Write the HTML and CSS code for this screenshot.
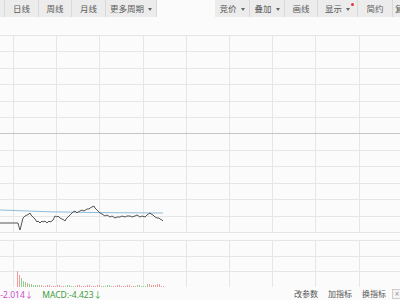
FILE: index.html
```html
<!DOCTYPE html>
<html lang="zh-CN">
<head>
  <meta charset="UTF-8" />
  <title>分时走势</title>
  <link rel="stylesheet" href="styles.css">
</head>
<body>
  <div class="toolbar">
    <div class="tool-group">
      <div class="btn w5"></div>
      <div class="btn w34">日线</div>
      <div class="btn w33">周线</div>
      <div class="btn w34">月线</div>
      <div class="btn w51">更多周期<span class="caret"></span></div>
    </div>
    <div class="tool-group right">
      <div class="btn w35">竞价<span class="caret"></span></div>
      <div class="btn w35">叠加<span class="caret"></span></div>
      <div class="btn w33">画线</div>
      <div class="btn w40 has-dot">显示<span class="caret"></span><span class="dot"></span></div>
      <div class="btn w35">简约</div>
      <div class="btn w35 cut">复权</div>
    </div>
  </div>

  <svg class="chart" width="400" height="270" viewBox="0 17 400 270">
    <g id="grid" shape-rendering="crispEdges"></g>
    <line class="mid" x1="0" y1="133.5" x2="400" y2="133.5" shape-rendering="crispEdges"/>
    <polyline class="avg" points="0,210 50,211.8 100,212.6 163,213"/>
    <polyline class="price" points="0,223 18,223 19,227 20,230 21,226 23,218 25,216 27,215 29,214 30,213 31,215 33,217 35,219 37,222 38,221 40,223 42,221 43,222 45,221 47,223 49,221 50,222 52,221 53,220 54,218 55,216 57,217 58,216 60,218 62,219 64,220 65,221 66,219 68,217 70,215 72,213 73,212 75,211 77,213 78,212 80,211 82,210 84,211 87,209 89,209 90,208 92,207 94,206 95,208 97,210 99,212 100,213 102,214 105,216 107,215 110,217 112,216 115,218 117,217 120,217 122,216 125,217 127,216 130,216 132,217 135,216 137,215 140,217 142,216 145,217 147,215 150,213 151,214 153,215 155,217 157,218 159,218 160,219 162,220 163,221"/>
    <g id="bars" shape-rendering="crispEdges"></g>
  </svg>

  <div class="legend">
    <div class="legend-left">
      <span class="dea">:-2.014↓</span>
      <span class="macd">MACD:-4.423↓</span>
    </div>
    <div class="legend-right">
      <span>改参数</span>
      <span>加指标</span>
      <span>换指标</span>
      <span class="close">×</span>
    </div>
  </div>

  <script>
    const NS = "http://www.w3.org/2000/svg";
    const grid = document.getElementById('grid');
    const bars = document.getElementById('bars');

    function line(x1, y1, x2, y2) {
      const l = document.createElementNS(NS, 'line');
      l.setAttribute('x1', x1); l.setAttribute('y1', y1);
      l.setAttribute('x2', x2); l.setAttribute('y2', y2);
      grid.appendChild(l);
    }

    // main chart: 12 rows, indicator: 3 rows
    for (let i = 0; i <= 12; i++) {
      const y = Math.round(35 + i * 16.42) + 0.5;
      if (i !== 6) line(0, y, 400, y);
    }
    for (let i = 0; i <= 3; i++) {
      const y = Math.round(240 + i * 15.67) + 0.5;
      line(0, y, 400, y);
    }
    for (let i = 0; i < 9; i++) {
      const x = Math.round(13 + i * 43.2) + 0.5;
      line(x, 35, x, 232);
      line(x, 240, x, 287);
    }

    // macd bars
    for (let x = 17; x <= 163; x += 2) {
      const k = x - 17;
      let h = 14 * Math.exp(-k / 6) + 1 + ((x * 7) % 5) / 5;
      if (x > 145 && x < 160) h += 1;
      const r = document.createElementNS(NS, 'rect');
      r.setAttribute('x', x);
      r.setAttribute('y', 287 - h);
      r.setAttribute('width', 1);
      r.setAttribute('height', h);
      const green = (k > 2 && k < 10) || (Math.floor(k / 12) % 3 === 1);
      r.setAttribute('class', green ? 'bar-down' : 'bar-up');
      bars.appendChild(r);
    }
  </script>
</body>
</html>
```

FILE: styles.css
```css
html, body {
  margin: 0;
  width: 400px;
  height: 300px;
  overflow: hidden;
}
body {
  background: #fbfbfb;
  font-family: "Noto Sans", "Noto Sans CJK SC", sans-serif;
  color: #5a5a5a;
}
.toolbar {
  display: flex;
  height: 17px;
  overflow: hidden;
}
.tool-group {
  display: flex;
  flex-shrink: 0;
  background: #ececec;
}
.tool-group.right {
  margin-left: 58px;
}
.btn {
  position: relative;
  box-sizing: border-box;
  flex-shrink: 0;
  height: 17px;
  line-height: 17px;
  font-size: 8.5px;
  text-align: center;
  border-right: 1px solid #d9d9d9;
  white-space: nowrap;
}
.w5 { width: 5px; }
.w33 { width: 33px; }
.w34 { width: 34px; }
.w35 { width: 35px; }
.w40 { width: 40px; }
.w51 { width: 51px; }
.btn.cut {
  text-align: left;
  padding-left: 2px;
}
.caret {
  display: inline-block;
  margin-left: 4px;
  vertical-align: middle;
  border-left: 2px solid transparent;
  border-right: 2px solid transparent;
  border-top: 3px solid #666;
}
.dot {
  position: absolute;
  top: 3px;
  right: 3px;
  width: 3px;
  height: 3px;
  border-radius: 50%;
  background: #e8333a;
}
.chart {
  display: block;
}
#grid line {
  stroke: #e6e6e6;
  stroke-width: 1;
}
.mid {
  stroke: #c6c6c6;
  stroke-width: 1;
}
.price {
  fill: none;
  stroke: #555;
  stroke-width: 1;
}
.avg {
  fill: none;
  stroke: #8fbcdb;
  stroke-width: 1;
}
.bar-up { fill: #f29a9a; }
.bar-down { fill: #8fcf8f; }
.legend {
  display: flex;
  justify-content: space-between;
  align-items: center;
  height: 13px;
  font-size: 8.5px;
  white-space: nowrap;
}
.legend-left {
  display: flex;
  gap: 9px;
  margin-left: -2px;
}
.dea { color: #d048d0; }
.macd { color: #3d9e3d; }
.legend-right {
  display: flex;
  align-items: center;
  gap: 10px;
  font-size: 8px;
  color: #555;
}
.close {
  box-sizing: border-box;
  width: 10px;
  height: 10px;
  line-height: 8px;
  text-align: center;
  border: 1px solid #ccc;
  color: #999;
  background: #f4f4f4;
  margin-left: -4px;
  margin-right: -2px;
}
```
